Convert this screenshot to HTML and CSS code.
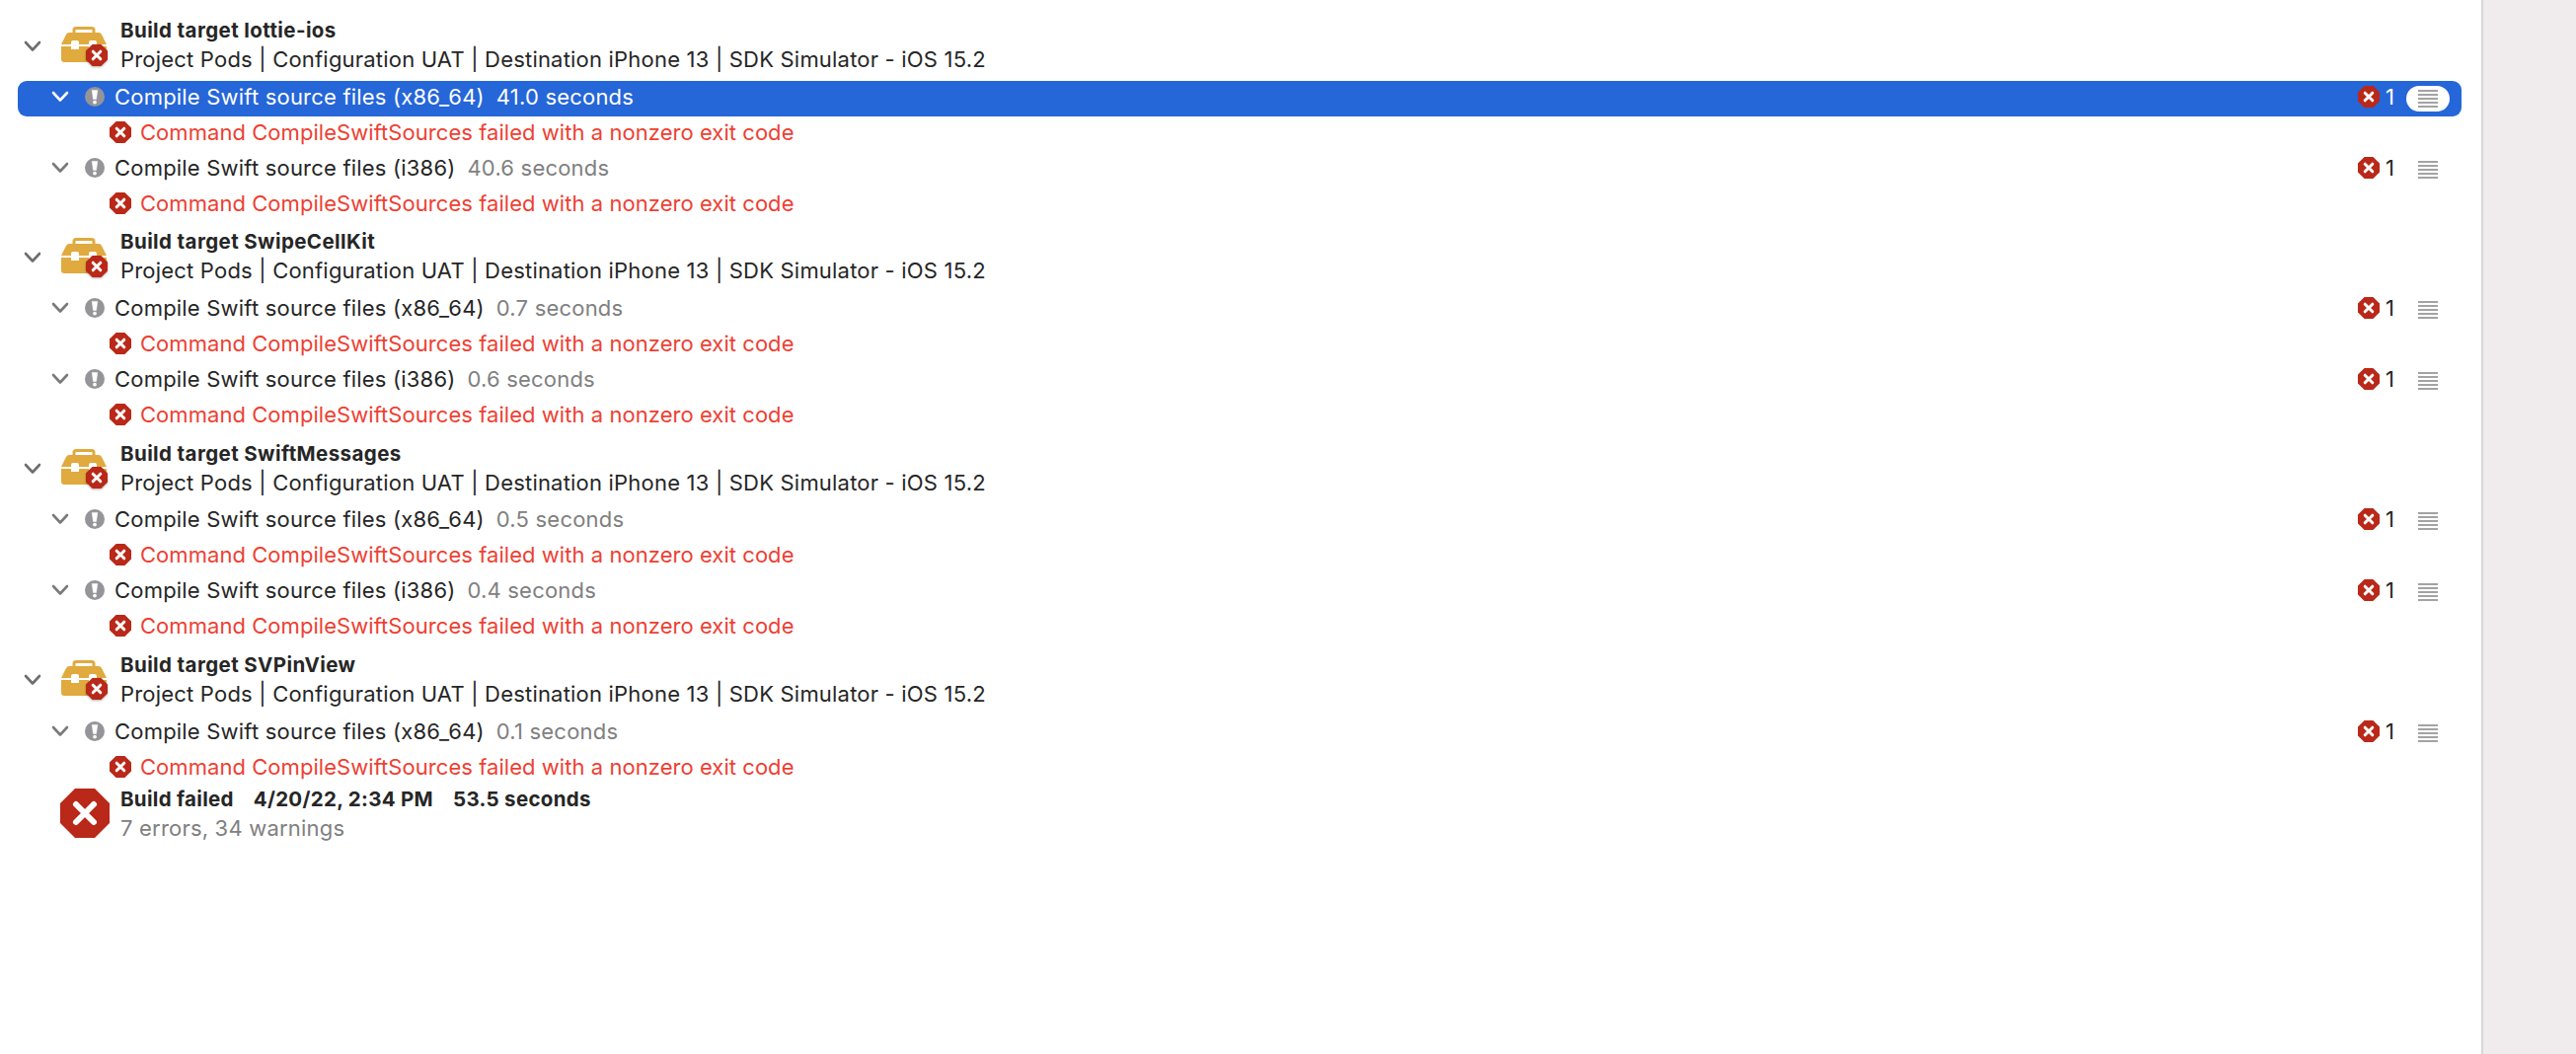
FILE: index.html
```html
<!DOCTYPE html>
<html lang="en">
<head>
<meta charset="utf-8">
<title>Build log</title>
<link rel="stylesheet" href="styles.css">
</head>
<body>
<svg class="defs" width="0" height="0" aria-hidden="true">
  <symbol id="chev" viewBox="0 0 18 12"><path d="M2 2 L9 9.5 L16 2" fill="none" stroke="currentColor" stroke-width="2.6" stroke-linecap="round" stroke-linejoin="round"/></symbol>
  <symbol id="warn" viewBox="0 0 20 20"><circle cx="10" cy="10" r="10" fill="#959599"/><path d="M7.2 3.4h5.6l-1.3 9.2h-3z" fill="#fff" stroke="#fff" stroke-width=".5" stroke-linejoin="round"/><circle cx="10" cy="15.6" r="1.9" fill="#fff"/></symbol>
  <symbol id="err" viewBox="0 0 22 22"><path d="M6.6 0h8.8L22 6.6v8.8L15.4 22H6.6L0 15.4V6.6z" fill="#b92818"/><path d="M7.2 7.2l7.6 7.6M14.8 7.2l-7.6 7.6" stroke="#fff" stroke-width="3" stroke-linecap="round"/></symbol>
  <symbol id="lines" viewBox="0 0 20 18"><path d="M0 1h20M0 5h20M0 9h20M0 13h20M0 17h20" stroke="#a3a3a3" stroke-width="2"/></symbol>
  <symbol id="box" viewBox="0 0 46 36"><path d="M13 7V3.5Q13 1.5 15 1.5H31Q33 1.5 33 3.5V7" fill="none" stroke="#e0aa3e" stroke-width="3"/><path d="M8 6H38Q40 6 41 8L46 18H0L5 8Q6 6 8 6z" fill="#e0aa3e"/><path d="M0 20H10V23H18V20H28V23H36V20H46V33Q46 36 43 36H3Q0 36 0 33z" fill="#e0aa3e"/><path d="M0 19H46" stroke="#fff" stroke-width="2"/><rect x="10" y="14" width="8" height="8" rx="2" fill="#fff"/><rect x="28" y="14" width="8" height="8" rx="2" fill="#fff"/></symbol>
  <symbol id="stop" viewBox="0 0 50 50"><path d="M15 0h20l15 15v20L35 50H15L0 35V15z" fill="#b92818"/><path d="M16 16l18 18M34 16L16 34" stroke="#fff" stroke-width="6" stroke-linecap="round"/></symbol>
</svg>

<div class="layout">
<main class="log">

  <section class="target">
    <svg class="chev"><use href="#chev"/></svg>
    <div class="target-icon"><svg class="box"><use href="#box"/></svg><svg class="box-err"><use href="#err"/></svg></div>
    <div class="target-text"><div class="title">Build target lottie-ios</div><div class="sub">Project Pods | Configuration UAT | Destination iPhone 13 | SDK Simulator - iOS 15.2</div></div>
  </section>
  <div class="row selected">
    <svg class="row-chev"><use href="#chev"/></svg><svg class="warn"><use href="#warn"/></svg>
    <span class="label">Compile Swift source files (x86_64)</span><span class="time">41.0 seconds</span>
    <div class="right"><svg class="err"><use href="#err"/></svg><span class="count">1</span><span class="pill"><svg class="lines"><use href="#lines"/></svg></span></div>
  </div>
  <div class="message"><svg class="err"><use href="#err"/></svg><span>Command CompileSwiftSources failed with a nonzero exit code</span></div>
  <div class="row">
    <svg class="row-chev"><use href="#chev"/></svg><svg class="warn"><use href="#warn"/></svg>
    <span class="label">Compile Swift source files (i386)</span><span class="time">40.6 seconds</span>
    <div class="right"><svg class="err"><use href="#err"/></svg><span class="count">1</span><span class="pill"><svg class="lines"><use href="#lines"/></svg></span></div>
  </div>
  <div class="message"><svg class="err"><use href="#err"/></svg><span>Command CompileSwiftSources failed with a nonzero exit code</span></div>

  <section class="target">
    <svg class="chev"><use href="#chev"/></svg>
    <div class="target-icon"><svg class="box"><use href="#box"/></svg><svg class="box-err"><use href="#err"/></svg></div>
    <div class="target-text"><div class="title">Build target SwipeCellKit</div><div class="sub">Project Pods | Configuration UAT | Destination iPhone 13 | SDK Simulator - iOS 15.2</div></div>
  </section>
  <div class="row">
    <svg class="row-chev"><use href="#chev"/></svg><svg class="warn"><use href="#warn"/></svg>
    <span class="label">Compile Swift source files (x86_64)</span><span class="time">0.7 seconds</span>
    <div class="right"><svg class="err"><use href="#err"/></svg><span class="count">1</span><span class="pill"><svg class="lines"><use href="#lines"/></svg></span></div>
  </div>
  <div class="message"><svg class="err"><use href="#err"/></svg><span>Command CompileSwiftSources failed with a nonzero exit code</span></div>
  <div class="row">
    <svg class="row-chev"><use href="#chev"/></svg><svg class="warn"><use href="#warn"/></svg>
    <span class="label">Compile Swift source files (i386)</span><span class="time">0.6 seconds</span>
    <div class="right"><svg class="err"><use href="#err"/></svg><span class="count">1</span><span class="pill"><svg class="lines"><use href="#lines"/></svg></span></div>
  </div>
  <div class="message"><svg class="err"><use href="#err"/></svg><span>Command CompileSwiftSources failed with a nonzero exit code</span></div>

  <section class="target">
    <svg class="chev"><use href="#chev"/></svg>
    <div class="target-icon"><svg class="box"><use href="#box"/></svg><svg class="box-err"><use href="#err"/></svg></div>
    <div class="target-text"><div class="title">Build target SwiftMessages</div><div class="sub">Project Pods | Configuration UAT | Destination iPhone 13 | SDK Simulator - iOS 15.2</div></div>
  </section>
  <div class="row">
    <svg class="row-chev"><use href="#chev"/></svg><svg class="warn"><use href="#warn"/></svg>
    <span class="label">Compile Swift source files (x86_64)</span><span class="time">0.5 seconds</span>
    <div class="right"><svg class="err"><use href="#err"/></svg><span class="count">1</span><span class="pill"><svg class="lines"><use href="#lines"/></svg></span></div>
  </div>
  <div class="message"><svg class="err"><use href="#err"/></svg><span>Command CompileSwiftSources failed with a nonzero exit code</span></div>
  <div class="row">
    <svg class="row-chev"><use href="#chev"/></svg><svg class="warn"><use href="#warn"/></svg>
    <span class="label">Compile Swift source files (i386)</span><span class="time">0.4 seconds</span>
    <div class="right"><svg class="err"><use href="#err"/></svg><span class="count">1</span><span class="pill"><svg class="lines"><use href="#lines"/></svg></span></div>
  </div>
  <div class="message"><svg class="err"><use href="#err"/></svg><span>Command CompileSwiftSources failed with a nonzero exit code</span></div>

  <section class="target">
    <svg class="chev"><use href="#chev"/></svg>
    <div class="target-icon"><svg class="box"><use href="#box"/></svg><svg class="box-err"><use href="#err"/></svg></div>
    <div class="target-text"><div class="title">Build target SVPinView</div><div class="sub">Project Pods | Configuration UAT | Destination iPhone 13 | SDK Simulator - iOS 15.2</div></div>
  </section>
  <div class="row">
    <svg class="row-chev"><use href="#chev"/></svg><svg class="warn"><use href="#warn"/></svg>
    <span class="label">Compile Swift source files (x86_64)</span><span class="time">0.1 seconds</span>
    <div class="right"><svg class="err"><use href="#err"/></svg><span class="count">1</span><span class="pill"><svg class="lines"><use href="#lines"/></svg></span></div>
  </div>
  <div class="message"><svg class="err"><use href="#err"/></svg><span>Command CompileSwiftSources failed with a nonzero exit code</span></div>

  <section class="summary">
    <svg class="stop"><use href="#stop"/></svg>
    <div class="target-text">
      <div class="title summary-title"><span>Build failed</span><span>4/20/22, 2:34 PM</span><span>53.5 seconds</span></div>
      <div class="sub muted">7 errors, 34 warnings</div>
    </div>
  </section>
</main>
<aside class="side"></aside>
</div>
</body>
</html>
```
FILE: styles.css
```css
* { box-sizing: border-box; }
html, body { margin: 0; height: 100%; }
body {
  font-family: Inter, "Liberation Sans", sans-serif;
  color: #262626;
  background: #fff;
  overflow: hidden;
}
.defs { display: block; height: 0; }
.layout { display: flex; height: 1068px; }
.log { flex: 1; padding: 11.8px 20px 0 18px; min-width: 0; }
.side { width: 96px; background: #f0ecee; border-left: 2px solid #d9d6d8; }

.target { display: flex; align-items: center; height: 70.2px; padding-bottom: 2.2px; }
.chev { width: 18px; height: 12px; margin: 2px 0 0 6px; color: #6e6e6e; flex: none; }
.target-icon { position: relative; width: 50px; height: 40px; margin: 2px 0 0 20px; flex: none; }
.box { width: 46px; height: 36px; display: block; }
.box-err { position: absolute; left: 25px; top: 18px; width: 22px; height: 22px; filter: drop-shadow(0 1px 1px rgba(0,0,0,.3)); }
.target-text { margin-left: 10px; display: flex; flex-direction: column; gap: 7px; }
.title { font-size: 20.5px; font-weight: 700; line-height: 23px; letter-spacing: .4px; color: #262626; }
.sub { font-size: 22px; line-height: 23px; letter-spacing: .2px; color: #262626; white-space: nowrap; }
.muted { color: #808080; }
.summary-title { display: flex; gap: 20px; letter-spacing: .3px; }

.row { display: flex; align-items: center; height: 36px; padding: 0 0 4px 34px; border-radius: 9px; font-size: 22px; letter-spacing: .2px; white-space: nowrap; }
.row-chev { width: 18px; height: 12px; color: #7a7a7a; flex: none; }
.warn { width: 20px; height: 20px; margin-left: 16px; flex: none; }
.label { margin-left: 10px; }
.time { margin-left: 12px; color: #808080; }
.right { margin-left: auto; display: flex; align-items: center; padding-right: 12px; }
.err { width: 22px; height: 22px; flex: none; display: block; }
.count { margin-left: 6px; width: 11px; }
.pill { margin: 4px 0 0 10px; width: 44px; height: 26px; border-radius: 13px; display: flex; align-items: center; justify-content: center; }
.lines { width: 20px; height: 18px; display: block; }

.selected { background: #2566d8; color: #fff; }
.selected .row-chev { color: #fff; }
.selected .time { color: #fff; }
.selected .pill { background: #fff; }

.message { display: flex; align-items: center; height: 36px; padding: 0 0 4px 93px; color: #ee3f33; font-size: 22px; letter-spacing: .05px; white-space: nowrap; }
.message span { margin-left: 9px; }

.summary { display: flex; align-items: center; height: 55px; }
.stop { width: 50px; height: 50px; margin-left: 43px; flex: none; }
.summary .target-text { margin-left: 11px; }
```
